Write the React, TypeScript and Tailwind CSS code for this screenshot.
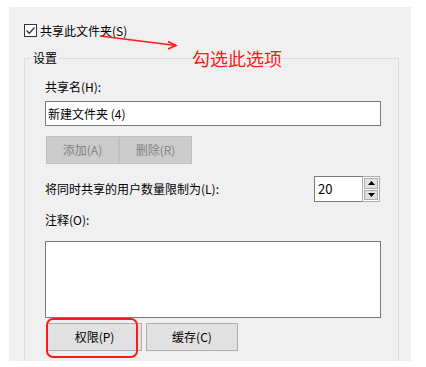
import React from "react";

const font = { fontFamily: '"Noto Sans CJK SC", "Noto Sans", sans-serif' };

function SpinArrow({ up }: { up?: boolean }) {
  return (
    <svg width="7" height="4" viewBox="0 0 7 4" className="block">
      {up ? <polygon points="3.5,0 7,4 0,4" fill="#000" /> : <polygon points="0,0 7,0 3.5,4" fill="#000" />}
    </svg>
  );
}

export default function App() {
  return (
    <div className="w-[426px] h-[367px] bg-white pt-[7px] pl-[9px] text-[12px] text-black" style={font}>
      <div className="relative w-[402px] h-[354px] bg-[#f0f0f0] overflow-hidden">
        {/* share checkbox */}
        <div className="flex items-center ml-[15px] pt-[17px] h-[30px]">
          <div className="w-[13px] h-[13px] border border-[#333] bg-white flex items-center justify-center">
            <svg width="11" height="11" viewBox="0 0 11 11">
              <polyline points="1.5,5.5 4.3,8.3 9.5,2.5" fill="none" stroke="#333" strokeWidth="1.3" />
            </svg>
          </div>
          <span className="ml-[3px] leading-[16px]">共享此文件夹(S)</span>
        </div>

        {/* settings group */}
        <fieldset className="ml-[15px] mt-[13px] w-[375px] h-[330px] border border-[#dcdcdc] pl-[20px]">
          <legend className="-ml-[15px] px-[3px] leading-[16px]">设置</legend>
          <div className="pt-[13px] leading-[16px]">共享名(H):</div>
          <div className="mt-[6px] w-[336px] h-[25px] border border-[#7a7a7a] bg-white pl-[2px] flex items-center leading-[16px]">
            新建文件夹 (4)
          </div>
          <div className="flex mt-[10px] ml-[1px]">
            <div className="w-[73px] h-[28px] bg-[#cccccc] border border-[#bfbfbf] text-[#838383] flex items-center justify-center">添加(A)</div>
            <div className="w-[73px] h-[28px] bg-[#cccccc] border border-[#bfbfbf] text-[#838383] flex items-center justify-center">删除(R)</div>
          </div>
          <div className="flex items-center mt-[12px] w-[336px] h-[26px]">
            <span className="leading-[16px]">将同时共享的用户数量限制为(L):</span>
            <div className="ml-auto mr-[1px] flex h-[26px]">
              <div className="w-[48px] h-[26px] border border-[#7a7a7a] border-r-0 bg-white pl-[3px] flex items-center text-[13px] leading-[16px]">20</div>
              <div className="w-[18px] h-[26px] border border-[#adadad] bg-white p-[1px] flex flex-col gap-[1px]">
                <div className="flex-1 bg-[#e1e1e1] border border-[#adadad] flex items-center justify-center"><SpinArrow up /></div>
                <div className="flex-1 bg-[#e1e1e1] border border-[#adadad] flex items-center justify-center"><SpinArrow /></div>
              </div>
            </div>
          </div>
          <div className="mt-[10px] leading-[16px]">注释(O):</div>
          <div className="mt-[13px] w-[336px] h-[77px] border border-[#7a7a7a] bg-white" />
          <div className="flex mt-[5px] ml-[2px]">
            <div className="w-[95px] h-[28px] bg-[#e1e1e1] border border-[#adadad] flex items-center justify-center">权限(P)</div>
            <div className="ml-[4px] w-[92px] h-[28px] bg-[#e1e1e1] border border-[#adadad] flex items-center justify-center">缓存(C)</div>
          </div>
        </fieldset>

        {/* annotations */}
        <svg className="absolute left-0 top-0" width="402" height="354" viewBox="0 0 402 354">
          <line x1="91" y1="29" x2="167" y2="38.5" stroke="#ff1a1a" strokeWidth="1.6" />
          <polyline points="159,34.5 167,38.5 159,42" fill="none" stroke="#ff1a1a" strokeWidth="1.6" />
        </svg>
        <div className="absolute left-[183px] top-[41px] text-[18px] leading-[20px] text-[#ff1a1a]">勾选此选项</div>
        <div className="absolute left-[37px] top-[311px] w-[92px] h-[40px] border-2 border-[#ff1a1a] rounded-[7px]" />
      </div>
    </div>
  );
}
